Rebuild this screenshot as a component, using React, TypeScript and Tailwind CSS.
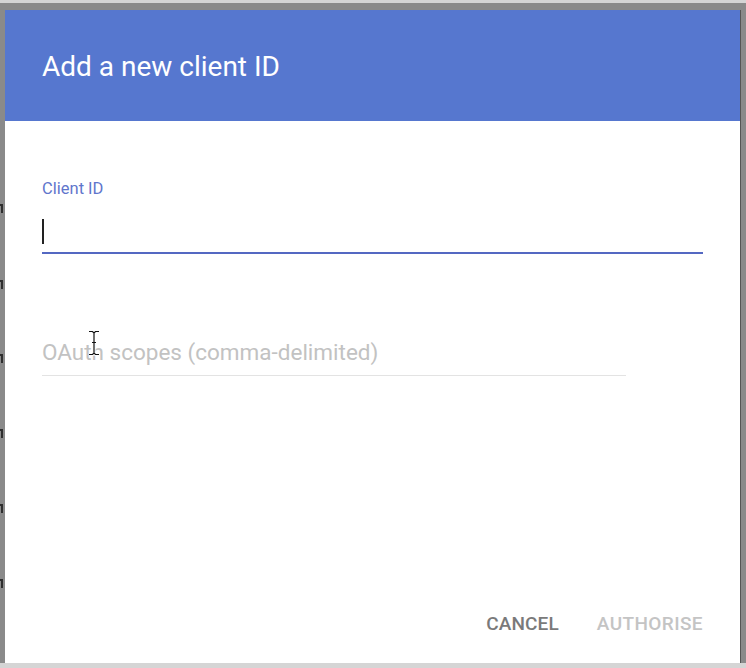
import React from "react";

// dark bits of the page text peeking out on the left edge
const edgeMarks = [197, 273, 347, 422, 497, 572];

function IBeam() {
  return (
    <svg width="12" height="26" viewBox="0 0 12 26" className="absolute left-[83px] top-[320px]">
      <path d="M1 1.5h3.5L6 3l1.5-1.5H11M6 3v20M1 24.5h3.5L6 23l1.5 1.5H11M4 12.5h4" fill="none" stroke="#fff" strokeWidth="3" />
      <path d="M1 1.5h3.5L6 3l1.5-1.5H11M6 3v20M1 24.5h3.5L6 23l1.5 1.5H11M4 12.5h4" fill="none" stroke="#111" strokeWidth="1.2" />
    </svg>
  );
}

export default function App() {
  return (
    <div className="w-[746px] h-[668px] bg-[#d5d5d5] pt-[3px] pb-[5px] overflow-hidden font-['Roboto',sans-serif]">
      {/* dimmed page behind the dialog */}
      <div className="relative h-[660px] bg-[#8a8a8a] flex pt-[7px] pl-[5px] pr-[6px]">
        <div className="absolute left-0 top-0 w-[5px] h-full overflow-hidden">
          {edgeMarks.map((top) => (
            <div key={top} className="absolute left-0 w-[3px] h-[9px] border-t-2 border-r-2 border-[#2e2e2e]" style={{ top: top + 4 }} />
          ))}
        </div>

        {/* dialog */}
        <div className="relative flex-1 flex flex-col bg-white shadow-[1px_0_0_#555]">
          <header className="h-[111px] bg-[#5677cf] pl-[37px] pt-[43px]">
            <h1 className="text-[28px] leading-[28px] text-white">Add a new client ID</h1>
          </header>

          <div className="flex-1 flex flex-col px-[37px] pt-[60px]">
            <label className="text-[16.5px] leading-[16px] text-[#5f76cc]">Client ID</label>
            <div className="h-[57px] border-b-2 border-[#5468c2] flex items-end pb-[8px]">
              <span className="w-[2px] h-[25px] bg-[#222]" />
            </div>

            <div className="mt-[87px] w-[584px] border-b border-[#e3e3e3] pb-[8px]">
              <span className="text-[22.5px] leading-[23px] text-[#c2c2c2]">OAuth scopes (comma-delimited)</span>
            </div>

            <div className="mt-auto flex justify-end gap-[38px] pb-[30px]">
              <button className="text-[19px] leading-[19px] font-medium text-[#7a7a7a] tracking-[0.1px]">CANCEL</button>
              <button className="text-[19px] leading-[19px] font-medium text-[#c4c4c4] tracking-[0.4px]">AUTHORISE</button>
            </div>
          </div>

          <IBeam />
        </div>
      </div>
    </div>
  );
}
